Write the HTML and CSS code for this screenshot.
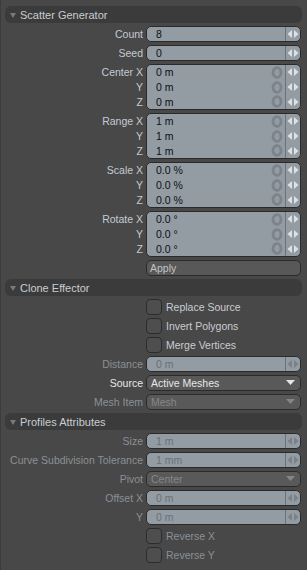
FILE: index.html
```html
<!DOCTYPE html>
<html>
<head>
<meta charset="utf-8">
<link rel="stylesheet" href="styles.css">
</head>
<body>
<div class="panel">
  <div class="hdr"><span class="tri"></span>Scatter Generator</div>

  <div class="row"><div class="lbl">Count</div>
    <div class="field"><span class="val">8</span><span class="spin"><svg width="12" height="8" viewBox="0 0 12 8"><path d="M5 0 L5 8 L0.5 4 Z M7 0 L7 8 L11.5 4 Z"/></svg></span></div></div>
  <div class="row"><div class="lbl">Seed</div>
    <div class="field"><span class="val">0</span><span class="spin"><svg width="12" height="8" viewBox="0 0 12 8"><path d="M5 0 L5 8 L0.5 4 Z M7 0 L7 8 L11.5 4 Z"/></svg></span></div></div>

  <div class="vgroup">
    <div class="vlbls"><div>Center X</div><div>Y</div><div>Z</div></div>
    <div class="vbox">
      <div class="vline"><span class="val">0 m</span><svg class="ring" width="12" height="13" viewBox="0 0 12 13"><ellipse cx="6" cy="6.5" rx="4" ry="4.8"/></svg><span class="spin"><svg width="12" height="8" viewBox="0 0 12 8"><path d="M5 0 L5 8 L0.5 4 Z M7 0 L7 8 L11.5 4 Z"/></svg></span></div>
      <div class="vline"><span class="val">0 m</span><svg class="ring" width="12" height="13" viewBox="0 0 12 13"><ellipse cx="6" cy="6.5" rx="4" ry="4.8"/></svg><span class="spin"><svg width="12" height="8" viewBox="0 0 12 8"><path d="M5 0 L5 8 L0.5 4 Z M7 0 L7 8 L11.5 4 Z"/></svg></span></div>
      <div class="vline"><span class="val">0 m</span><svg class="ring" width="12" height="13" viewBox="0 0 12 13"><ellipse cx="6" cy="6.5" rx="4" ry="4.8"/></svg><span class="spin"><svg width="12" height="8" viewBox="0 0 12 8"><path d="M5 0 L5 8 L0.5 4 Z M7 0 L7 8 L11.5 4 Z"/></svg></span></div>
    </div>
  </div>

  <div class="vgroup">
    <div class="vlbls"><div>Range X</div><div>Y</div><div>Z</div></div>
    <div class="vbox">
      <div class="vline"><span class="val">1 m</span><svg class="ring" width="12" height="13" viewBox="0 0 12 13"><ellipse cx="6" cy="6.5" rx="4" ry="4.8"/></svg><span class="spin"><svg width="12" height="8" viewBox="0 0 12 8"><path d="M5 0 L5 8 L0.5 4 Z M7 0 L7 8 L11.5 4 Z"/></svg></span></div>
      <div class="vline"><span class="val">1 m</span><svg class="ring" width="12" height="13" viewBox="0 0 12 13"><ellipse cx="6" cy="6.5" rx="4" ry="4.8"/></svg><span class="spin"><svg width="12" height="8" viewBox="0 0 12 8"><path d="M5 0 L5 8 L0.5 4 Z M7 0 L7 8 L11.5 4 Z"/></svg></span></div>
      <div class="vline"><span class="val">1 m</span><svg class="ring" width="12" height="13" viewBox="0 0 12 13"><ellipse cx="6" cy="6.5" rx="4" ry="4.8"/></svg><span class="spin"><svg width="12" height="8" viewBox="0 0 12 8"><path d="M5 0 L5 8 L0.5 4 Z M7 0 L7 8 L11.5 4 Z"/></svg></span></div>
    </div>
  </div>

  <div class="vgroup">
    <div class="vlbls"><div>Scale X</div><div>Y</div><div>Z</div></div>
    <div class="vbox">
      <div class="vline"><span class="val">0.0 %</span><svg class="ring" width="12" height="13" viewBox="0 0 12 13"><ellipse cx="6" cy="6.5" rx="4" ry="4.8"/></svg><span class="spin"><svg width="12" height="8" viewBox="0 0 12 8"><path d="M5 0 L5 8 L0.5 4 Z M7 0 L7 8 L11.5 4 Z"/></svg></span></div>
      <div class="vline"><span class="val">0.0 %</span><svg class="ring" width="12" height="13" viewBox="0 0 12 13"><ellipse cx="6" cy="6.5" rx="4" ry="4.8"/></svg><span class="spin"><svg width="12" height="8" viewBox="0 0 12 8"><path d="M5 0 L5 8 L0.5 4 Z M7 0 L7 8 L11.5 4 Z"/></svg></span></div>
      <div class="vline"><span class="val">0.0 %</span><svg class="ring" width="12" height="13" viewBox="0 0 12 13"><ellipse cx="6" cy="6.5" rx="4" ry="4.8"/></svg><span class="spin"><svg width="12" height="8" viewBox="0 0 12 8"><path d="M5 0 L5 8 L0.5 4 Z M7 0 L7 8 L11.5 4 Z"/></svg></span></div>
    </div>
  </div>

  <div class="vgroup">
    <div class="vlbls"><div>Rotate X</div><div>Y</div><div>Z</div></div>
    <div class="vbox">
      <div class="vline"><span class="val">0.0 °</span><svg class="ring" width="12" height="13" viewBox="0 0 12 13"><ellipse cx="6" cy="6.5" rx="4" ry="4.8"/></svg><span class="spin"><svg width="12" height="8" viewBox="0 0 12 8"><path d="M5 0 L5 8 L0.5 4 Z M7 0 L7 8 L11.5 4 Z"/></svg></span></div>
      <div class="vline"><span class="val">0.0 °</span><svg class="ring" width="12" height="13" viewBox="0 0 12 13"><ellipse cx="6" cy="6.5" rx="4" ry="4.8"/></svg><span class="spin"><svg width="12" height="8" viewBox="0 0 12 8"><path d="M5 0 L5 8 L0.5 4 Z M7 0 L7 8 L11.5 4 Z"/></svg></span></div>
      <div class="vline"><span class="val">0.0 °</span><svg class="ring" width="12" height="13" viewBox="0 0 12 13"><ellipse cx="6" cy="6.5" rx="4" ry="4.8"/></svg><span class="spin"><svg width="12" height="8" viewBox="0 0 12 8"><path d="M5 0 L5 8 L0.5 4 Z M7 0 L7 8 L11.5 4 Z"/></svg></span></div>
    </div>
  </div>

  <div class="row"><div class="lbl"></div><div class="btn">Apply</div></div>

  <div class="hdr"><span class="tri"></span>Clone Effector</div>

  <div class="row"><div class="lbl"></div><div class="check"><span class="box"></span>Replace Source</div></div>
  <div class="row"><div class="lbl"></div><div class="check"><span class="box"></span>Invert Polygons</div></div>
  <div class="row"><div class="lbl"></div><div class="check"><span class="box"></span>Merge Vertices</div></div>
  <div class="row"><div class="lbl dis">Distance</div>
    <div class="field off"><span class="val">0 m</span><span class="spin"><svg width="12" height="8" viewBox="0 0 12 8"><path d="M5 0 L5 8 L0.5 4 Z M7 0 L7 8 L11.5 4 Z"/></svg></span></div></div>
  <div class="row"><div class="lbl hi">Source</div>
    <div class="drop"><span>Active Meshes</span><svg width="9" height="5" viewBox="0 0 9 5"><path d="M0 0 L9 0 L4.5 5 Z"/></svg></div></div>
  <div class="row"><div class="lbl dis">Mesh Item</div>
    <div class="drop off"><span>Mesh</span><svg width="9" height="5" viewBox="0 0 9 5"><path d="M0 0 L9 0 L4.5 5 Z"/></svg></div></div>

  <div class="hdr"><span class="tri"></span>Profiles Attributes</div>

  <div class="row"><div class="lbl dis">Size</div>
    <div class="field off"><span class="val">1 m</span><span class="spin"><svg width="12" height="8" viewBox="0 0 12 8"><path d="M5 0 L5 8 L0.5 4 Z M7 0 L7 8 L11.5 4 Z"/></svg></span></div></div>
  <div class="row"><div class="lbl dis">Curve Subdivision Tolerance</div>
    <div class="field off"><span class="val">1 mm</span><span class="spin"><svg width="12" height="8" viewBox="0 0 12 8"><path d="M5 0 L5 8 L0.5 4 Z M7 0 L7 8 L11.5 4 Z"/></svg></span></div></div>
  <div class="row"><div class="lbl dis">Pivot</div>
    <div class="drop off"><span>Center</span><svg width="9" height="5" viewBox="0 0 9 5"><path d="M0 0 L9 0 L4.5 5 Z"/></svg></div></div>
  <div class="row"><div class="lbl dis">Offset X</div>
    <div class="field off"><span class="val">0 m</span><span class="spin"><svg width="12" height="8" viewBox="0 0 12 8"><path d="M5 0 L5 8 L0.5 4 Z M7 0 L7 8 L11.5 4 Z"/></svg></span></div></div>
  <div class="row"><div class="lbl dis">Y</div>
    <div class="field off"><span class="val">0 m</span><span class="spin"><svg width="12" height="8" viewBox="0 0 12 8"><path d="M5 0 L5 8 L0.5 4 Z M7 0 L7 8 L11.5 4 Z"/></svg></span></div></div>
  <div class="row"><div class="lbl"></div><div class="check off"><span class="box"></span>Reverse X</div></div>
  <div class="row"><div class="lbl"></div><div class="check off"><span class="box"></span>Reverse Y</div></div>
</div>
</body>
</html>
```

FILE: styles.css
```css
html, body {
  margin: 0;
  padding: 0;
}
body {
  width: 307px;
  height: 570px;
  overflow: hidden;
  background: #484848;
  font-family: "Liberation Sans", Arial, sans-serif;
  font-size: 10.5px;
  color: #c4cbd3;
}
.panel {
  height: 570px;
  box-sizing: border-box;
  border-left: 1px solid #3c3c3c;
  padding: 6px 6px 0 0;
  display: flex;
  flex-direction: column;
  gap: 3px;
}
.hdr {
  height: 17px;
  margin: 0 -1px 0 4px;
  background: #3b3b3b;
  border-radius: 6px;
  display: flex;
  align-items: center;
  font-size: 11px;
  color: #c8cdd2;
}
.tri {
  width: 0;
  height: 0;
  margin: 1px 4px 0 5px;
  border-left: 3px solid transparent;
  border-right: 3px solid transparent;
  border-top: 5px solid #777b7f;
}
.row {
  height: 16px;
  display: grid;
  grid-template-columns: 142px 1fr;
  column-gap: 3px;
}
.lbl {
  text-align: right;
  line-height: 16px;
  white-space: nowrap;
}
.lbl.dis { color: #8a9096; }
.lbl.hi { color: #e6e8ea; }

.field {
  box-sizing: border-box;
  background: #939ba3;
  border: 1px solid #2a2a2a;
  border-radius: 5px;
  display: flex;
  align-items: center;
  color: #0e1114;
}
.val {
  flex: 1;
  padding-left: 9px;
  white-space: nowrap;
}
.spin {
  align-self: stretch;
  width: 14px;
  border-left: 1px solid #6b7279;
  display: flex;
  align-items: center;
  justify-content: center;
}
.spin svg { fill: #dde1e5; display: block; }
.field.off { color: #6a7178; }
.field.off .spin svg { fill: #7a8188; }

.vgroup {
  height: 46px;
  display: grid;
  grid-template-columns: 142px 1fr;
  column-gap: 3px;
}
.vlbls {
  display: flex;
  flex-direction: column;
  padding: 1px 0;
  box-sizing: border-box;
}
.vlbls div {
  flex: 1;
  display: flex;
  align-items: center;
  justify-content: flex-end;
  white-space: nowrap;
}
.vbox {
  box-sizing: border-box;
  background: #939ba3;
  border: 1px solid #2a2a2a;
  border-radius: 5px;
  display: flex;
  flex-direction: column;
  color: #0e1114;
}
.vline {
  flex: 1;
  display: flex;
  align-items: center;
}
.ring {
  display: block;
  margin-right: 2px;
}
.ring ellipse {
  fill: none;
  stroke: #7c838a;
  stroke-width: 2.8;
}

.btn {
  box-sizing: border-box;
  background: #585858;
  border: 1px solid #2b2b2b;
  border-radius: 5px;
  color: #c2c2c0;
  line-height: 14px;
  padding-left: 3px;
}
.drop {
  box-sizing: border-box;
  background: #595959;
  border: 1px solid #2b2b2b;
  border-radius: 5px;
  color: #e8e8e8;
  display: flex;
  align-items: center;
  justify-content: space-between;
  padding: 0 5px 0 4px;
}
.drop svg { fill: #e4e4e4; display: block; margin-top: -1px; }
.drop.off { color: #878787; }
.drop.off svg { fill: #858585; }

.check {
  display: flex;
  align-items: center;
  white-space: nowrap;
  color: #c8cdd2;
}
.check .box {
  box-sizing: border-box;
  width: 16px;
  height: 16px;
  margin-right: 4px;
  background: #4e4e4e;
  border: 1px solid #2c2c2c;
  border-radius: 4px;
}
.check.off { color: #8a9096; }
```
